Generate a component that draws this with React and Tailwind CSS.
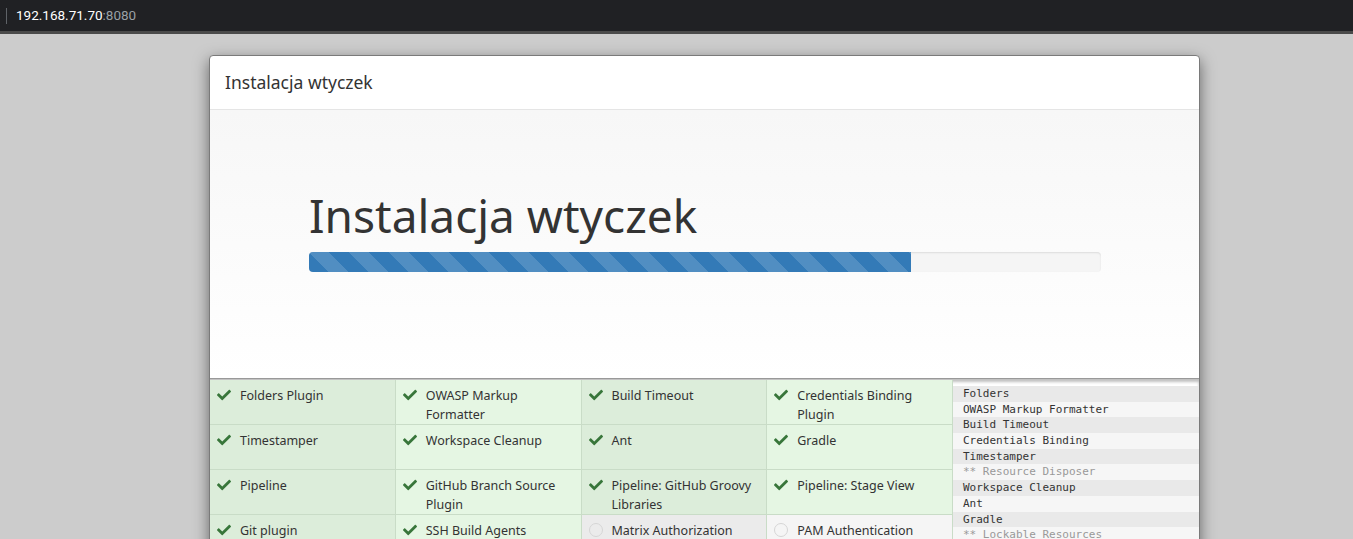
import { FaCheck } from "react-icons/fa";

const plugins = [
  ["Folders Plugin", true],
  ["OWASP Markup Formatter", true],
  ["Build Timeout", true],
  ["Credentials Binding Plugin", true],
  ["Timestamper", true],
  ["Workspace Cleanup", true],
  ["Ant", true],
  ["Gradle", true],
  ["Pipeline", true],
  ["GitHub Branch Source Plugin", true],
  ["Pipeline: GitHub Groovy Libraries", true],
  ["Pipeline: Stage View", true],
  ["Git plugin", true],
  ["SSH Build Agents", true],
  ["Matrix Authorization", false],
  ["PAM Authentication", false],
];

const log = [
  ["Folders", false],
  ["OWASP Markup Formatter", false],
  ["Build Timeout", false],
  ["Credentials Binding", false],
  ["Timestamper", false],
  ["** Resource Disposer", true],
  ["Workspace Cleanup", false],
  ["Ant", false],
  ["Gradle", false],
  ["** Lockable Resources", true],
];

function Cell({ name, done, col }) {
  const dark = col % 2 === 0;
  const bg = done
    ? dark
      ? "bg-[#dcedda]"
      : "bg-[#e5f6e3]"
    : dark
      ? "bg-[#ebebeb]"
      : "bg-[#f5f5f5]";
  return (
    <div
      className={`${bg} h-[45px] flex items-start gap-[9px] pl-[7px] pr-2 pt-[6px] border-b border-r border-[#c9dcc7]`}
    >
      {done ? (
        <FaCheck className="text-[#38763a] w-[14px] h-[14px] mt-[2px] shrink-0" />
      ) : (
        <span className="w-[14px] h-[14px] mt-[2px] rounded-full border border-[#d6d6d6] shrink-0" />
      )}
      <span className="text-[12.5px] leading-[19px] text-[#333]">{name}</span>
    </div>
  );
}

export default function App() {
  return (
    <div className="h-[539px] overflow-hidden bg-[#cccccc] font-['Noto_Sans','Open_Sans',sans-serif]">
      {/* browser bar */}
      <div className="h-[31px] bg-[#202124] flex items-center">
        <span className="ml-[6px] w-px h-[16px] bg-[#5f6368]" />
        <span className="ml-[9px] text-[13.5px] text-white font-['Roboto','Noto_Sans',sans-serif]">
          192.168.71.70<span className="text-[#9aa0a6]">:8080</span>
        </span>
      </div>
      <div className="h-[3px] bg-[#4a4a4a]" />

      {/* modal */}
      <div className="mt-[21px] ml-[209px] w-[991px] bg-white border border-[#7a7a7a] rounded-[4px] shadow-[0_5px_15px_rgba(0,0,0,0.5)]">
        <div className="h-[54px] flex items-center px-[15px] border-b border-[#e5e5e5]">
          <h4 className="text-[17.5px] text-[#333]">Instalacja wtyczek</h4>
        </div>
        <div className="h-[268px] bg-gradient-to-b from-[#f7f7f7] to-white pl-[99px] pt-[75px]">
          <h1 className="text-[46px] leading-[61px] text-[#333]">Instalacja wtyczek</h1>
          <div className="mt-[6px] w-[792px] h-[20px] rounded-[4px] bg-[#f5f5f5] shadow-[inset_0_1px_2px_rgba(0,0,0,0.1)] overflow-hidden">
            <div className="h-full w-[76%] bg-[#337ab7] bg-[linear-gradient(45deg,rgba(255,255,255,.15)_25%,transparent_25%,transparent_50%,rgba(255,255,255,.15)_50%,rgba(255,255,255,.15)_75%,transparent_75%,transparent)] bg-[length:40px_40px]" />
          </div>
        </div>
        <div className="flex shadow-[inset_0_3px_3px_rgba(0,0,0,0.25)] border-t border-[#999]">
          <div className="w-[743px] grid grid-cols-4 pt-[1px]">
            {plugins.map(([n, d], i) => (
              <Cell key={n} name={n} done={d} col={i % 4} />
            ))}
          </div>
          <div className="flex-1 pt-[7px] px-0">
            {log.map(([t, g], i) => (
              <div
                key={t}
                className={`${i % 2 === 0 ? "bg-[#e9e9e9]" : "bg-[#f6f6f6]"} h-[15.7px] pl-[10px] text-[11px] leading-[15.7px] font-['DejaVu_Sans_Mono','Liberation_Mono',monospace] ${g ? "text-[#999]" : "text-[#333]"}`}
              >
                {t}
              </div>
            ))}
          </div>
        </div>
      </div>
    </div>
  );
}
